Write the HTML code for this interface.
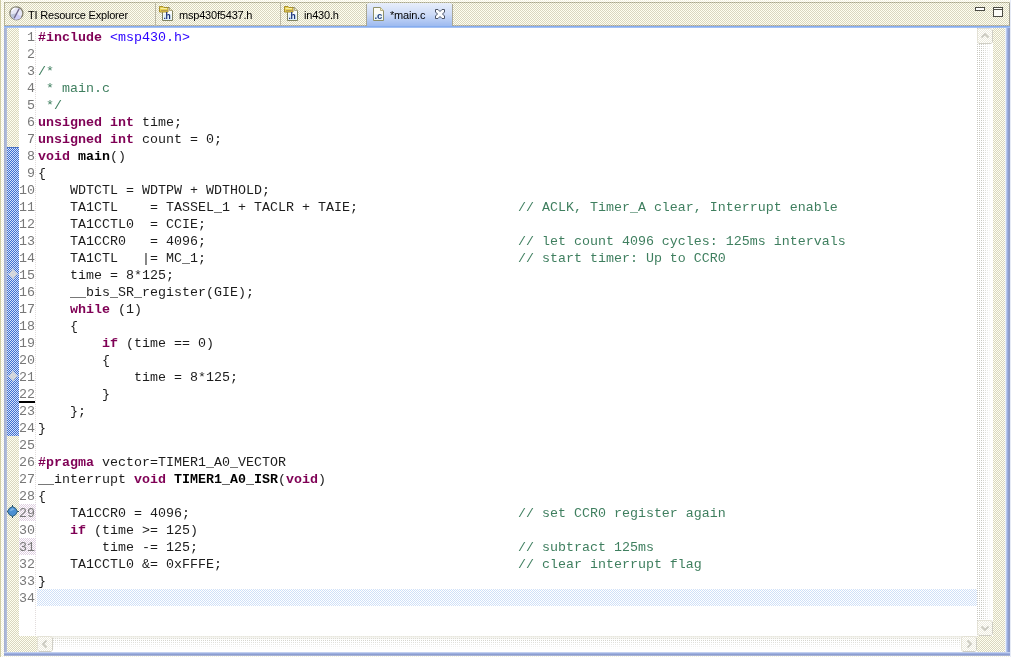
<!DOCTYPE html>
<html><head><meta charset="utf-8"><title>main.c</title>
<style>
*{box-sizing:border-box;margin:0;padding:0}
html,body{width:1011px;height:657px;overflow:hidden}
body{position:relative;background:#fbfbf0;font-family:"Liberation Sans",sans-serif;font-size:11px;color:#000}
.abs{position:absolute}
.beige{background:repeating-conic-gradient(#fffff0 0 25%,#d9d6c0 0 50%) 0 0/2px 2px}
.btnf{background:repeating-conic-gradient(#ffffff 0 25%,#eceadc 0 50%) 0 0/2px 2px}
.cream{background:repeating-conic-gradient(#ffffff 0 25%,#f4f2dc 0 50%) 0 0/2px 2px}
.rangeb{background:repeating-conic-gradient(#d6e2fb 0 25%,#3f6fd0 0 50%) 0 0/2px 2px}
.pink{background:repeating-conic-gradient(#ffffff 0 25%,#dfcfe1 0 50%) 0 0/2px 2px}
.curl{background:repeating-conic-gradient(#ffffff 0 25%,#cfe0f8 0 50%) 0 0/2px 2px}
.track{background:conic-gradient(#ffffff 0 75%,#c9c9c2 0 100%) 0 0/2px 2px}
.htrack{background:conic-gradient(#ffffff 0 75%,#d4d4cc 0 100%) 0 0/2px 2px}
#outer{left:0;top:0;width:1011px;height:657px}
#edge{left:0;top:0;width:1px;height:657px;background:#cfcca4}
#tabbar{left:5px;top:3px;width:1004px;height:23px}
#topline{left:4px;top:2px;width:1006px;height:1px;background:repeating-linear-gradient(90deg,#a6a48a 0 1px,#cfcdb4 1px 2px)}
#botline{left:5px;top:25px;width:1004px;height:1px;background:repeating-linear-gradient(90deg,#a7a496 0 1px,#c9c6b6 1px 2px)}
#leftline{left:4px;top:3px;width:1px;height:23px;background:#b5b294}
#rightline{left:1009px;top:3px;width:1px;height:24px;background:#9f9d90}
.sep{top:3px;width:1px;height:23px;background:#b9b6a2}
.tabtxt{will-change:transform;top:3px;height:23px;line-height:24px;white-space:nowrap;font-size:11px;letter-spacing:-0.2px}
#active{left:367px;top:3px;width:85px;height:25px;background:linear-gradient(#e8eefb 0,#cddbf7 45%,#a4bff1 85%,#96b6ee 100%);border-top-left-radius:2px;border-top-right-radius:2px}
#actl{left:366px;top:4px;width:1px;height:22px;background:#a9a794}
#actr{left:452px;top:4px;width:1px;height:22px;background:#a9a794}
#blueline{left:4px;top:26px;width:1006px;height:2px;background:linear-gradient(#86adef 0 1px,#a4c1f3 1px 2px)}
#bl{left:4px;top:28px;width:3px;height:626px;background:linear-gradient(90deg,#a4aed0,#b2bedc)}
#br{left:1005px;top:28px;width:5px;height:627px;background:linear-gradient(90deg,#eaf0fb 0 1px,#b9c9ee 1px 2px,#9db0e0 2px 3px,#8d9ed0 3px 4px,#8e9bc6 4px 5px)}
#bb{left:4px;top:652px;width:1006px;height:4px;background:linear-gradient(#c3d0ef 0 1px,#9db0e0 1px 2px,#8d9ed0 2px 3px,#a9b4d6 3px 4px)}
#rmargin{left:1010px;top:0;width:1px;height:657px;background:#e6ebf6}
#editor{left:19px;top:28px;width:958px;height:608px;background:#fff}
#ruler{left:7px;top:28px;width:12px;height:624px}
#range{left:7px;top:147px;width:12px;height:289px;border-top:1px solid #4a72c4}
#vsb{left:977px;top:28px;width:16px;height:608px}
#vsbfade{left:977px;top:28px;width:16px;height:608px;background:linear-gradient(90deg,rgba(255,255,255,0) 0 30%,#fff 90%)}
#hsbfade{left:37px;top:636px;width:940px;height:16px;background:linear-gradient(rgba(236,235,226,.9) 0,rgba(255,255,255,0) 25%,rgba(255,255,255,.5) 50%,#fff 85%)}
#ovr{left:993px;top:28px;width:12px;height:624px}
#hsb{left:37px;top:636px;width:940px;height:16px}
#hleft{left:19px;top:636px;width:18px;height:16px}
#corner{left:977px;top:636px;width:16px;height:16px}
#code{will-change:transform;left:19px;top:29px;width:958px;font-family:"Liberation Mono",monospace;font-size:13.33px;line-height:17px}
.ln{height:17px;position:relative}
.hlbg{left:19px;width:17px;height:17px}
#curline{left:37px;top:589px;width:940px;height:17px}
.n{transform:scaleY(.92);transform-origin:0 12.5px;position:absolute;left:0;top:0;width:16px;text-align:right;color:#787878;height:17px}
.c{transform:scaleY(.92);transform-origin:0 12.5px;white-space:pre;position:absolute;left:19px;top:0;height:17px;color:#1c1c1c}
.kw{color:#7f0055;font-weight:bold}
.fn{color:#000;font-weight:bold}
.str{color:#2a00ff}
.cm{color:#3f7f5f}
#vdots{left:35px;top:28px;width:1px;height:608px;background:repeating-linear-gradient(#e2dcdc 0 1px,#fff 1px 2px)}
#uline{left:19px;top:401px;width:16px;height:2px;background:#000}
svg{position:absolute;overflow:visible;will-change:transform}
svg text{font-family:"Liberation Sans",sans-serif}
</style></head><body>
<div class="abs cream" id="outer"></div>
<div class="abs" id="edge"></div>
<div class="abs" id="rmargin"></div>
<div class="abs beige" id="tabbar"></div>
<div class="abs" id="topline"></div>
<div class="abs" id="leftline"></div>
<div class="abs" id="rightline"></div>
<div class="abs" id="botline"></div>
<div class="abs" id="active"></div>
<div class="abs" id="actl"></div>
<div class="abs" id="actr"></div>
<div class="abs sep" style="left:155px"></div>
<div class="abs sep" style="left:280px"></div>
<svg style="left:9px;top:6px" width="15" height="15" viewBox="0 0 15 15">
<circle cx="7.4" cy="7.3" r="6.5" fill="#e6e7f6" stroke="#807e6c" stroke-width="1.3"/>
<path d="M7.400 7.300 L12.500 11 A6.300 6.300 0 0 1 5 13.200 Z" fill="#cdcdf8"/>
<path d="M7.400 7.300 L5 13.200 A6.300 6.300 0 0 1 1.300 8.500 Z" fill="#bcc4da"/>
<path d="M10 3L5.400 11.800" stroke="#6f6788" stroke-width="1.4" stroke-linecap="round"/>
<path d="M2.600 5a5.500 5.500 0 0 1 3.800-3" stroke="#fff" stroke-width="1.400" fill="none"/>
</svg><svg style="left:159px;top:5px" width="16" height="17" viewBox="0 0 16 17">
<path d="M3.500 2.500h7l3 3v10h-10z" fill="#fbfdfc" stroke="#7f8260" stroke-width="1"/>
<path d="M10.500 2.500v3h3" fill="#f4eed0" stroke="#b0a884" stroke-width="1"/>
<rect x="4.500" y="9" width="8" height="6" fill="#dfeff7"/>
<path d="M0.500 1.500h3.500l1 1h4v4.500h-8.500z" fill="#e9d254" stroke="#a88f2c" stroke-width="1"/>
<path d="M1.500 3.500h6.500" stroke="#f8efa0" stroke-width="1"/>
<path d="M2 5.500h7" stroke="#b59a50" stroke-width="1"/>
<text x="4.400" y="14.200" font-size="8.500" font-weight="bold" fill="#1b2f7a" letter-spacing="-0.3">.h</text>
</svg><svg style="left:284px;top:5px" width="16" height="17" viewBox="0 0 16 17">
<path d="M3.500 2.500h7l3 3v10h-10z" fill="#fbfdfc" stroke="#7f8260" stroke-width="1"/>
<path d="M10.500 2.500v3h3" fill="#f4eed0" stroke="#b0a884" stroke-width="1"/>
<rect x="4.500" y="9" width="8" height="6" fill="#dfeff7"/>
<path d="M0.500 1.500h3.500l1 1h4v4.500h-8.500z" fill="#e9d254" stroke="#a88f2c" stroke-width="1"/>
<path d="M1.500 3.500h6.500" stroke="#f8efa0" stroke-width="1"/>
<path d="M2 5.500h7" stroke="#b59a50" stroke-width="1"/>
<text x="4.400" y="14.200" font-size="8.500" font-weight="bold" fill="#1b2f7a" letter-spacing="-0.3">.h</text>
</svg><svg style="left:372px;top:5px" width="14" height="17" viewBox="0 0 14 17">
<path d="M1.5 2.5h7l3 3v10h-10z" fill="#fdfdf6" stroke="#8f9068" stroke-width="1"/>
<path d="M8.5 2.5v3h3" fill="#f3efc8" stroke="#b9b184" stroke-width="1"/>
<rect x="2.5" y="9" width="8" height="6" fill="#eaf6f8"/>
<text x="2.600" y="14" font-size="9.500" font-weight="bold" fill="#25427f" letter-spacing="-0.3">.c</text>
</svg><svg style="left:435px;top:9px" width="10" height="10" viewBox="0 0 10 10">
<path d="M0.5 0.5h2.5l2 2l2-2h2.5v2.5l-2 2l2 2v2.5h-2.5l-2-2l-2 2h-2.5v-2.5l2-2l-2-2z" fill="#fbfcfe" stroke="#4a5264" stroke-width="1"/>
</svg><svg style="left:975px;top:7px" width="11" height="4" viewBox="0 0 11 4">
<rect x="0.5" y="0.5" width="9" height="3" fill="#fff" stroke="#4b4b44" stroke-width="1"/></svg>
<svg style="left:993px;top:7px" width="11" height="11" viewBox="0 0 11 11">
<rect x="0.5" y="0.5" width="9" height="9" fill="#fdfdf8" stroke="#4b4b44" stroke-width="1"/>
<path d="M0.5 2.5h9" stroke="#4b4b44" stroke-width="1"/></svg>
<div class="abs tabtxt" style="left:28px">TI Resource Explorer</div>
<div class="abs tabtxt" style="left:179px">msp430f5437.h</div>
<div class="abs tabtxt" style="left:303.500px">in430.h</div>
<div class="abs tabtxt" style="left:390px">*main.c</div>
<div class="abs" id="blueline"></div>
<div class="abs" id="editor"></div>
<div class="abs beige" id="ruler"></div>
<div class="abs rangeb" id="range"></div>
<div class="abs" id="vdots"></div>
<div class="abs pink hlbg" style="top:504px"></div>
<div class="abs pink hlbg" style="top:538px"></div>
<div class="abs curl" id="curline"></div>
<div class="abs" id="uline"></div>
<svg style="left:7px;top:268px" width="12" height="12" viewBox="0 0 12 12">
<path d="M6 1.5L10 6L6 10.500L2 6z" fill="#dcdcdc" stroke="#c6ccd8" stroke-width="1"/>
<path d="M0.5 6h11M6 0.500v11" stroke="#cdd3de" stroke-width="1"/></svg><svg style="left:7px;top:370px" width="12" height="12" viewBox="0 0 12 12">
<path d="M6 1.5L10 6L6 10.500L2 6z" fill="#dcdcdc" stroke="#c6ccd8" stroke-width="1"/>
<path d="M0.5 6h11M6 0.500v11" stroke="#cdd3de" stroke-width="1"/></svg><svg style="left:6px;top:505px" width="13" height="13" viewBox="0 0 13 13">
<path d="M6.500 0v13M0 6.500h13" stroke="#1f4858" stroke-width="1"/>
<path d="M6.500 1.600L9.700 3.300L11.400 6.500L9.700 9.700L6.500 11.400L3.300 9.700L1.600 6.500L3.300 3.300z" fill="#4b8fd2" stroke="#2a5a74" stroke-width="1"/>
<path d="M6.500 3L8.500 4.500L5 6L4 6.300L4.500 4.500z" fill="#7fb4e6"/>
</svg>
<div class="abs" id="code">
<div class="ln"><span class="n">1</span><span class="c"><span class="kw">#include</span> <span class="str">&lt;msp430.h&gt;</span></span></div>
<div class="ln"><span class="n">2</span><span class="c"></span></div>
<div class="ln"><span class="n">3</span><span class="c"><span class="cm">/*</span></span></div>
<div class="ln"><span class="n">4</span><span class="c"><span class="cm"> * main.c</span></span></div>
<div class="ln"><span class="n">5</span><span class="c"><span class="cm"> */</span></span></div>
<div class="ln"><span class="n">6</span><span class="c"><span class="kw">unsigned</span> <span class="kw">int</span> time;</span></div>
<div class="ln"><span class="n">7</span><span class="c"><span class="kw">unsigned</span> <span class="kw">int</span> count = 0;</span></div>
<div class="ln"><span class="n">8</span><span class="c"><span class="kw">void</span> <span class="fn">main</span>()</span></div>
<div class="ln"><span class="n">9</span><span class="c">{</span></div>
<div class="ln"><span class="n">10</span><span class="c">    WDTCTL = WDTPW + WDTHOLD;</span></div>
<div class="ln"><span class="n">11</span><span class="c">    TA1CTL    = TASSEL_1 + TACLR + TAIE;                    <span class="cm">// ACLK, Timer_A clear, Interrupt enable</span></span></div>
<div class="ln"><span class="n">12</span><span class="c">    TA1CCTL0  = CCIE;</span></div>
<div class="ln"><span class="n">13</span><span class="c">    TA1CCR0   = 4096;                                       <span class="cm">// let count 4096 cycles: 125ms intervals</span></span></div>
<div class="ln"><span class="n">14</span><span class="c">    TA1CTL   |= MC_1;                                       <span class="cm">// start timer: Up to CCR0</span></span></div>
<div class="ln"><span class="n">15</span><span class="c">    time = 8*125;</span></div>
<div class="ln"><span class="n">16</span><span class="c">    __bis_SR_register(GIE);</span></div>
<div class="ln"><span class="n">17</span><span class="c">    <span class="kw">while</span> (1)</span></div>
<div class="ln"><span class="n">18</span><span class="c">    {</span></div>
<div class="ln"><span class="n">19</span><span class="c">        <span class="kw">if</span> (time == 0)</span></div>
<div class="ln"><span class="n">20</span><span class="c">        {</span></div>
<div class="ln"><span class="n">21</span><span class="c">            time = 8*125;</span></div>
<div class="ln"><span class="n">22</span><span class="c">        }</span></div>
<div class="ln"><span class="n">23</span><span class="c">    };</span></div>
<div class="ln"><span class="n">24</span><span class="c">}</span></div>
<div class="ln"><span class="n">25</span><span class="c"></span></div>
<div class="ln"><span class="n">26</span><span class="c"><span class="kw">#pragma</span> vector=TIMER1_A0_VECTOR</span></div>
<div class="ln"><span class="n">27</span><span class="c">__interrupt <span class="kw">void</span> <span class="fn">TIMER1_A0_ISR</span>(<span class="kw">void</span>)</span></div>
<div class="ln"><span class="n">28</span><span class="c">{</span></div>
<div class="ln"><span class="n hl">29</span><span class="c">    TA1CCR0 = 4096;                                         <span class="cm">// set CCR0 register again</span></span></div>
<div class="ln"><span class="n">30</span><span class="c">    <span class="kw">if</span> (time &gt;= 125)</span></div>
<div class="ln"><span class="n hl">31</span><span class="c">        time -= 125;                                        <span class="cm">// subtract 125ms</span></span></div>
<div class="ln"><span class="n">32</span><span class="c">    TA1CCTL0 &amp;= 0xFFFE;                                     <span class="cm">// clear interrupt flag</span></span></div>
<div class="ln"><span class="n">33</span><span class="c">}</span></div>
<div class="ln cur"><span class="n">34</span><span class="c"></span></div>
</div>
<div class="abs track" id="vsb"></div>
<div class="abs" id="vsbfade"></div>
<div class="abs beige" id="ovr"></div>
<div class="abs beige" id="hleft"></div>
<div class="abs htrack" id="hsb"></div>
<div class="abs" id="hsbfade"></div>
<div class="abs beige" id="corner"></div>
<div class="abs btnf" style="left:978px;top:29px;width:14px;height:14px"></div><svg style="left:977px;top:28px" width="16" height="16" viewBox="0 0 16 16">
<rect x="0.5" y="0.5" width="15" height="15" rx="2" fill="none" stroke="#e4e2d6" stroke-width="1"/>
<path d="M15.500 2v12M2 15.500h12" stroke="#d0cfc6" stroke-width="1"/>
<path d="M4.5 9.5l3.5-3.5l3.5 3.5" fill="none" stroke="#cbcac0" stroke-width="1.8"/></svg><div class="abs btnf" style="left:978px;top:621px;width:14px;height:14px"></div><svg style="left:977px;top:620px" width="16" height="16" viewBox="0 0 16 16">
<rect x="0.5" y="0.5" width="15" height="15" rx="2" fill="none" stroke="#e4e2d6" stroke-width="1"/>
<path d="M15.500 2v12M2 15.500h12" stroke="#d0cfc6" stroke-width="1"/>
<path d="M4.5 6.5l3.5 3.5l3.5-3.5" fill="none" stroke="#cbcac0" stroke-width="1.8"/></svg><div class="abs btnf" style="left:38px;top:637px;width:14px;height:14px"></div><svg style="left:37px;top:636px" width="16" height="16" viewBox="0 0 16 16">
<rect x="0.5" y="0.5" width="15" height="15" rx="2" fill="none" stroke="#e4e2d6" stroke-width="1"/>
<path d="M15.500 2v12M2 15.500h12" stroke="#d0cfc6" stroke-width="1"/>
<path d="M9.5 4.5l-3.5 3.5l3.5 3.5" fill="none" stroke="#cbcac0" stroke-width="1.8"/></svg><div class="abs btnf" style="left:962px;top:637px;width:14px;height:14px"></div><svg style="left:961px;top:636px" width="16" height="16" viewBox="0 0 16 16">
<rect x="0.5" y="0.5" width="15" height="15" rx="2" fill="none" stroke="#e4e2d6" stroke-width="1"/>
<path d="M15.500 2v12M2 15.500h12" stroke="#d0cfc6" stroke-width="1"/>
<path d="M6.5 4.5l3.5 3.5l-3.5 3.5" fill="none" stroke="#cbcac0" stroke-width="1.8"/></svg>
<div class="abs" id="bl"></div>
<div class="abs" id="br"></div>
<div class="abs" id="bb"></div>
</body></html>
